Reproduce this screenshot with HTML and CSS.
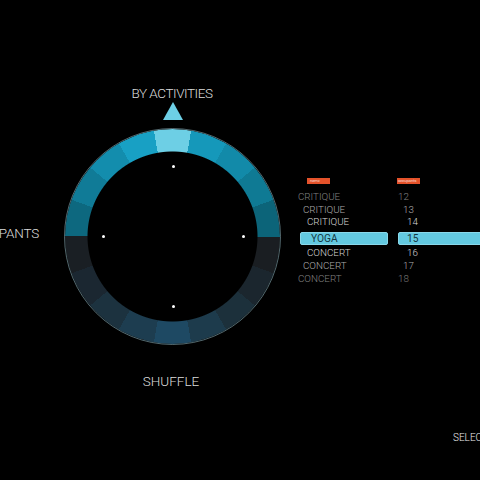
FILE: index.html
```html
<!DOCTYPE html>
<html>
<head>
<meta charset="utf-8">
<link rel="stylesheet" href="styles.css">
</head>
<body>
<div class="stage">
  <div class="label label-top">BY ACTIVITIES</div>
  <div class="pointer"></div>
  <div class="ring"></div>
  <div class="ring-edge"></div>
  <span class="dot dot-n"></span>
  <span class="dot dot-w"></span>
  <span class="dot dot-e"></span>
  <span class="dot dot-s"></span>
  <div class="label label-left">PARTICIPANTS</div>
  <div class="label label-bottom">SHUFFLE</div>

  <div class="picker">
    <div class="head">
      <span class="badge badge-name">name</span>
      <span class="badge badge-occ">occupants</span>
    </div>
    <div class="row far"><span class="name">CRITIQUE</span><span class="num">12</span></div>
    <div class="row mid"><span class="name">CRITIQUE</span><span class="num">13</span></div>
    <div class="row near first-near"><span class="name">CRITIQUE</span><span class="num">14</span></div>
    <div class="row sel"><span class="name">YOGA</span><span class="num">15</span></div>
    <div class="row near"><span class="name">CONCERT</span><span class="num">16</span></div>
    <div class="row mid"><span class="name">CONCERT</span><span class="num">17</span></div>
    <div class="row far"><span class="name">CONCERT</span><span class="num">18</span></div>
  </div>

  <div class="label label-select">SELECT</div>
</div>
</body>
</html>
```
FILE: styles.css
```css
html, body {
  margin: 0;
  padding: 0;
  background: #000;
}
body {
  font-family: Roboto, "Liberation Sans", sans-serif;
  color: #d9d9d9;
}
.stage {
  position: relative;
  width: 480px;
  height: 480px;
  overflow: hidden;
  background: #000;
}
.label {
  position: absolute;
  font-weight: 300;
  font-size: 13.5px;
  line-height: 14px;
  white-space: nowrap;
  color: #dcdcdc;
}
.label-top {
  left: 122px;
  width: 100px;
  top: 86px;
  text-align: center;
  letter-spacing: -0.45px;
}
.label-bottom {
  left: 121px;
  width: 100px;
  top: 374px;
  text-align: center;
}
.label-left {
  right: 441px;
  top: 226px;
  text-align: right;
  letter-spacing: -0.2px;
}
.label-select {
  left: 453px;
  top: 433px;
  font-size: 10px;
  line-height: 10px;
  color: #f0f0f0;
}
.pointer {
  position: absolute;
  left: 163px;
  top: 102px;
  width: 0;
  height: 0;
  border-left: 10.5px solid transparent;
  border-right: 10.5px solid transparent;
  border-bottom: 18px solid #6dcfe5;
}
.ring {
  position: absolute;
  left: 65px;
  top: 129px;
  width: 215px;
  height: 215px;
  border-radius: 50%;
  background: conic-gradient(from -10deg,
    #6dcfe5 0deg 20deg,
    #1598ba 20deg 40deg,
    #128aa9 40deg 60deg,
    #0f7a94 60deg 80deg,
    #0c6479 80deg 100deg,
    #1a1e22 100deg 120deg,
    #1b262e 120deg 140deg,
    #1c303b 140deg 160deg,
    #1d3b4c 160deg 180deg,
    #1e4963 180deg 200deg,
    #1d3d50 200deg 220deg,
    #1c323f 220deg 240deg,
    #1b2731 240deg 260deg,
    #1a1f24 260deg 280deg,
    #0d687f 280deg 300deg,
    #107b97 300deg 320deg,
    #138dad 320deg 340deg,
    #18a0c4 340deg 360deg);
  -webkit-mask: radial-gradient(circle closest-side, transparent 84.5px, #000 85.5px);
  mask: radial-gradient(circle closest-side, transparent 84.5px, #000 85.5px);
}
.ring-edge {
  position: absolute;
  left: 64px;
  top: 128px;
  width: 215px;
  height: 215px;
  border-radius: 50%;
  border: 1px solid rgba(150, 190, 200, 0.55);
}
.dot {
  position: absolute;
  width: 3px;
  height: 3px;
  border-radius: 50%;
  background: #fff;
}
.dot-n { left: 171.5px; top: 164.5px; }
.dot-s { left: 171.5px; top: 304.5px; }
.dot-w { left: 101.5px; top: 234.5px; }
.dot-e { left: 241.5px; top: 234.5px; }

.picker {
  position: absolute;
  left: 298px;
  top: 178px;
  width: 200px;
  display: flex;
  flex-direction: column;
  font-weight: 300;
  font-size: 9.8px;
}
.head {
  display: flex;
  height: 6px;
  margin-bottom: 6px;
}
.badge {
  display: block;
  width: 23px;
  height: 6px;
  background: #e4522a;
  color: #fff;
  font-size: 4px;
  line-height: 6px;
  padding-left: 3px;
  box-sizing: border-box;
  overflow: hidden;
  white-space: nowrap;
}
.badge-name { margin-left: 9px; }
.badge-occ { margin-left: 67px; padding-left: 1px; }
.row {
  display: flex;
  height: 13px;
  line-height: 13px;
  white-space: nowrap;
}
.row .name { width: 100px; }
.row.far { color: #808080; }
.row.mid { color: #ababab; padding-left: 5px; }
.row.near { color: #d6d6d6; padding-left: 9px; }
.row.first-near { height: 12px; line-height: 12px; }
.row.sel {
  margin: 4px 0 1px;
  color: #163843;
  font-size: 10.2px;
  font-weight: 400;
}
.row.sel .name, .row.sel .num {
  background: #63c9e0;
  border: 1px solid #8ad8ea;
  border-radius: 2px;
  box-sizing: border-box;
  height: 13px;
  line-height: 11px;
}
.row.sel .name {
  margin-left: 2px;
  width: 88px;
  padding-left: 10px;
}
.row.sel .num {
  margin-left: 10px;
  width: 100px;
  padding-left: 8px;
}
```
